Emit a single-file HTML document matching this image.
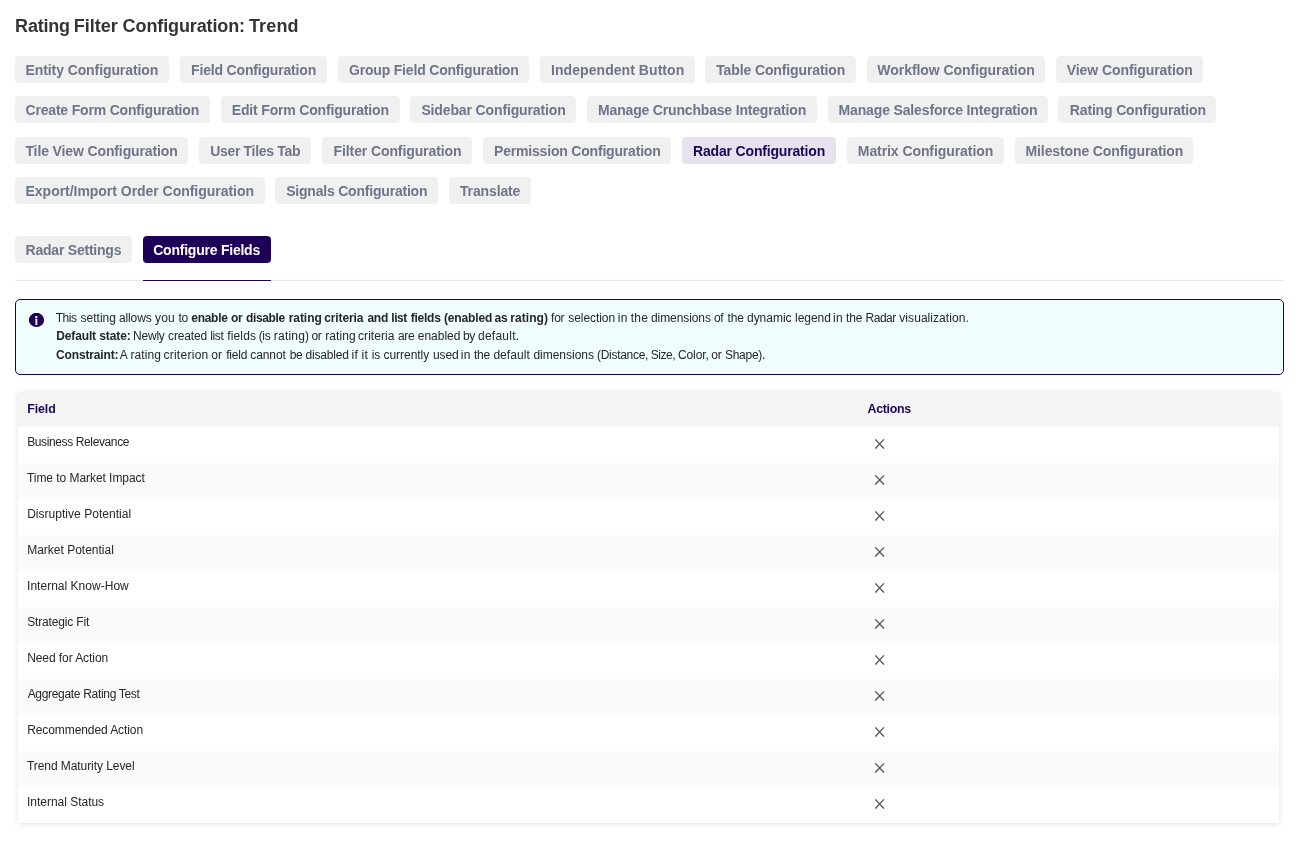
<!DOCTYPE html>
<html lang="en">
<head>
<meta charset="utf-8">
<title>Rating Filter Configuration: Trend</title>
<style>
html,body{margin:0;padding:0;background:#fff;}
body{font-family:"Liberation Sans", sans-serif;}
#app{position:relative;width:1299px;height:846px;overflow:hidden;background:#fff;will-change:transform;}
h1,p{margin:0;padding:0;font-weight:inherit;font-size:inherit;}
.t{position:absolute;display:block;white-space:pre;font-size:12px;line-height:18px;font-weight:400;color:#262626;}
b.t{font-weight:700;}
.title .t{font-size:18px;line-height:27px;font-weight:700;color:#343434;}
.pill{position:absolute;display:block;height:27px;border-radius:4px;background:#f0f0f1;text-decoration:none;}
.pill .t{font-size:14px;line-height:21px;font-weight:700;color:#6f7586;}
.pill.active{background:#e6e3ee;}
.pill.active .t{color:#1f0459;}
.pill.current{background:#1f0059;}
.pill.current .t{color:#fff;}
.line{position:absolute;left:15px;top:280px;width:1269px;height:1px;background:#e2e8f0;}
.line i{position:absolute;left:128px;top:0;width:128px;height:1px;background:#1f0059;}
.info{position:absolute;left:15px;top:299px;width:1267px;height:74px;border:1px solid #1f0059;border-radius:5px;background:#f0fdff;}
.ico,.x{position:absolute;display:block;}
.table{position:absolute;left:18px;top:393px;width:1261px;height:430px;border-radius:1px;background:#fff;box-shadow:0 0.5px 6px rgba(85,120,155,0.2);}
.th{position:absolute;left:0;top:0;width:100%;height:34px;background:#f5f5f5;}
.th .t{font-size:12.4px;line-height:19px;font-weight:700;color:#1f0459;}
.tr{position:absolute;left:0;width:100%;height:36px;background:#fff;}
.tr.alt{background:#fafafa;}
</style>
</head>
<body>
<div id="app">
<h1 class="title"><span class="t" style="left:15.1px;top:13.26px;letter-spacing:-0.208px">Rating </span><span class="t" style="left:73.85px;top:13.26px;letter-spacing:0.002px">Filter </span><span class="t" style="left:122.61px;top:13.26px;letter-spacing:-0.113px">Configuration: </span><span class="t" style="left:248.95px;top:13.26px;letter-spacing:0.156px">Trend</span></h1>
<nav class="nav">
<a class="pill" style="left:15px;top:56px;width:154px"><span class="t" style="left:10.56px;top:3.75px;letter-spacing:-0.097px">Entity Configuration</span></a>
<a class="pill" style="left:180px;top:56px;width:147px"><span class="t" style="left:11.06px;top:3.75px;letter-spacing:-0.174px">Field Configuration</span></a>
<a class="pill" style="left:338px;top:56px;width:191px"><span class="t" style="left:10.98px;top:3.75px;letter-spacing:-0.184px">Group Field Configuration</span></a>
<a class="pill" style="left:540px;top:56px;width:155px"><span class="t" style="left:11.06px;top:3.75px;letter-spacing:0.059px">Independent Button</span></a>
<a class="pill" style="left:705px;top:56px;width:151px"><span class="t" style="left:11.19px;top:3.75px;letter-spacing:-0.117px">Table Configuration</span></a>
<a class="pill" style="left:867px;top:56px;width:178px"><span class="t" style="left:10.34px;top:3.75px;letter-spacing:-0.046px">Workflow Configuration</span></a>
<a class="pill" style="left:1056px;top:56px;width:147px"><span class="t" style="left:10.75px;top:3.75px;letter-spacing:-0.076px">View Configuration</span></a>
<a class="pill" style="left:15px;top:96px;width:194.5px"><span class="t" style="left:10.48px;top:3.75px;letter-spacing:-0.181px">Create Form Configuration</span></a>
<a class="pill" style="left:221px;top:96px;width:179px"><span class="t" style="left:10.81px;top:3.75px;letter-spacing:-0.172px">Edit Form Configuration</span></a>
<a class="pill" style="left:410px;top:96px;width:165.5px"><span class="t" style="left:11.4px;top:3.75px;letter-spacing:-0.131px">Sidebar Configuration</span></a>
<a class="pill" style="left:587px;top:96px;width:230px"><span class="t" style="left:11.06px;top:3.75px;letter-spacing:-0.177px">Manage Crunchbase Integration</span></a>
<a class="pill" style="left:828px;top:96px;width:220px"><span class="t" style="left:10.56px;top:3.75px;letter-spacing:-0.147px">Manage Salesforce Integration</span></a>
<a class="pill" style="left:1058px;top:96px;width:158px"><span class="t" style="left:11.81px;top:3.75px;letter-spacing:-0.158px">Rating Configuration</span></a>
<a class="pill" style="left:15px;top:137px;width:172.5px"><span class="t" style="left:10.44px;top:3.75px;letter-spacing:-0.124px">Tile View Configuration</span></a>
<a class="pill" style="left:199px;top:137px;width:111.5px"><span class="t" style="left:11.16px;top:3.75px;letter-spacing:-0.316px">User Tiles Tab</span></a>
<a class="pill" style="left:322px;top:137px;width:150px"><span class="t" style="left:11.56px;top:3.75px;letter-spacing:-0.102px">Filter Configuration</span></a>
<a class="pill" style="left:483px;top:137px;width:188px"><span class="t" style="left:11.06px;top:3.75px;letter-spacing:-0.192px">Permission Configuration</span></a>
<a class="pill active" style="left:682px;top:137px;width:153.5px"><span class="t" style="left:11.06px;top:3.75px;letter-spacing:-0.174px">Radar Configuration</span></a>
<a class="pill" style="left:847px;top:137px;width:157px"><span class="t" style="left:10.81px;top:3.75px;letter-spacing:-0.076px">Matrix Configuration</span></a>
<a class="pill" style="left:1015px;top:137px;width:178px"><span class="t" style="left:10.56px;top:3.75px;letter-spacing:-0.114px">Milestone Configuration</span></a>
<a class="pill" style="left:15px;top:177px;width:249.5px"><span class="t" style="left:10.56px;top:3.75px;letter-spacing:-0.031px">Export/Import Order Configuration</span></a>
<a class="pill" style="left:275px;top:177px;width:163px"><span class="t" style="left:11.15px;top:3.75px;letter-spacing:-0.204px">Signals Configuration</span></a>
<a class="pill" style="left:449px;top:177px;width:82px"><span class="t" style="left:10.94px;top:3.75px;letter-spacing:-0.131px">Translate</span></a>
</nav>
<div class="tabs">
<a class="pill" style="left:15px;top:236px;width:117px"><span class="t" style="left:10.56px;top:3.75px;letter-spacing:-0.223px">Radar Settings</span></a>
<a class="pill current" style="left:143px;top:236px;width:128px"><span class="t" style="left:10.23px;top:3.75px;letter-spacing:-0.230px">Configure Fields</span></a>
<div class="line"><i></i></div>
</div>
<div class="info">
<svg class="ico" style="left:13px;top:13px" width="18" height="18" viewBox="0 0 18 18"><ellipse cx="7.5" cy="6.95" rx="7.6" ry="7.15" fill="#1f0059"/><rect x="6.15" y="2.95" width="2.3" height="2" rx="0.6" fill="#fff"/><path d="M6 5.85h2.35v6.25h-1.95v-5.65h-0.4z" fill="#fff" fill-opacity="0.92"/></svg>
<p>
<span class="t w" style="left:39.72px;top:8.84px;letter-spacing:-0.500px">This </span><span class="t w" style="left:64.62px;top:8.84px;letter-spacing:-0.000px">setting </span><span class="t w" style="left:102.89px;top:8.84px;letter-spacing:-0.103px">allows </span><span class="t w" style="left:139.02px;top:8.84px;letter-spacing:0.183px">you </span><span class="t w" style="left:162.42px;top:8.84px;letter-spacing:-0.350px">to</span>
<b class="t w" style="left:175.23px;top:8.84px;letter-spacing:-0.267px">enable </b><b class="t w" style="left:215.03px;top:8.84px;letter-spacing:-0.350px">or </b><b class="t w" style="left:230.01px;top:8.84px;letter-spacing:-0.360px">disable </b><b class="t w" style="left:272.66px;top:8.84px;letter-spacing:-0.050px">rating </b><b class="t w" style="left:308.23px;top:8.84px;letter-spacing:-0.106px">criteria </b><b class="t w" style="left:351.45px;top:8.84px;letter-spacing:-0.251px">and </b><b class="t w" style="left:375.31px;top:8.84px;letter-spacing:-0.453px">list </b><b class="t w" style="left:394.69px;top:8.84px;letter-spacing:-0.229px">fields </b><b class="t w" style="left:428px;top:8.84px;letter-spacing:-0.151px">(enabled </b><b class="t w" style="left:478.57px;top:8.84px;letter-spacing:-0.350px">as </b><b class="t w" style="left:494.16px;top:8.84px;letter-spacing:0.082px">rating)</b>
<span class="t w" style="left:535.03px;top:8.84px;letter-spacing:-0.223px">for </span><span class="t w" style="left:552.27px;top:8.84px;letter-spacing:-0.058px">selection </span><span class="t w" style="left:601.8px;top:8.84px;letter-spacing:0.250px">in </span><span class="t w" style="left:614.72px;top:8.84px;letter-spacing:0.214px">the </span><span class="t w" style="left:635px;top:8.84px;letter-spacing:-0.085px">dimensions </span><span class="t w" style="left:698.06px;top:8.84px;letter-spacing:-0.350px">of </span><span class="t w" style="left:711.62px;top:8.84px;letter-spacing:-0.236px">the </span><span class="t w" style="left:731px;top:8.84px;letter-spacing:-0.028px">dynamic </span><span class="t w" style="left:779.04px;top:8.84px;letter-spacing:-0.053px">legend </span><span class="t w" style="left:817px;top:8.84px;letter-spacing:0.250px">in </span><span class="t w" style="left:830.02px;top:8.84px;letter-spacing:-0.086px">the </span><span class="t w" style="left:849.61px;top:8.84px;letter-spacing:-0.500px">Radar </span><span class="t w" style="left:883.31px;top:8.84px;letter-spacing:0.060px">visualization.</span>
</p>
<p>
<b class="t w" style="left:40.25px;top:27.24px;letter-spacing:-0.137px">Default </b><b class="t w" style="left:83.28px;top:27.24px;letter-spacing:-0.108px">state:</b>
<span class="t w" style="left:117.07px;top:27.24px;letter-spacing:-0.216px">Newly </span><span class="t w" style="left:152.09px;top:27.24px;letter-spacing:-0.158px">created </span><span class="t w" style="left:194.24px;top:27.24px;letter-spacing:-0.358px">list </span><span class="t w" style="left:211.33px;top:27.24px;letter-spacing:0.118px">fields </span><span class="t w" style="left:242.71px;top:27.24px;letter-spacing:-0.350px">(is </span><span class="t w" style="left:257.85px;top:27.24px;letter-spacing:0.204px">rating) </span><span class="t w" style="left:295.39px;top:27.24px;letter-spacing:-0.350px">or </span><span class="t w" style="left:309.15px;top:27.24px;letter-spacing:0.088px">rating </span><span class="t w" style="left:342.09px;top:27.24px;letter-spacing:0.042px">criteria </span><span class="t w" style="left:382.04px;top:27.24px;letter-spacing:-0.350px">are </span><span class="t w" style="left:401.79px;top:27.24px;letter-spacing:-0.006px">enabled </span><span class="t w" style="left:447.01px;top:27.24px;letter-spacing:-0.350px">by </span><span class="t w" style="left:462px;top:27.24px;letter-spacing:0.246px">default.</span>
</p>
<p>
<b class="t w" style="left:40.11px;top:45.84px;letter-spacing:-0.160px">Constraint:</b>
<span class="t w" style="left:103.78px;top:45.84px;letter-spacing:-0.350px">A </span><span class="t w" style="left:114.45px;top:45.84px;letter-spacing:0.088px">rating </span><span class="t w" style="left:147.39px;top:45.84px;letter-spacing:0.275px">criterion </span><span class="t w" style="left:195.2px;top:45.84px;letter-spacing:0.250px">or </span><span class="t w" style="left:210.13px;top:45.84px;letter-spacing:-0.193px">field </span><span class="t w" style="left:234.29px;top:45.84px;letter-spacing:-0.087px">cannot </span><span class="t w" style="left:273.68px;top:45.84px;letter-spacing:-0.350px">be </span><span class="t w" style="left:289.4px;top:45.84px;letter-spacing:-0.161px">disabled </span><span class="t w" style="left:335.6px;top:45.84px;letter-spacing:0.250px">if </span><span class="t w" style="left:345.6px;top:45.84px;letter-spacing:0.250px">it </span><span class="t w" style="left:355.8px;top:45.84px;letter-spacing:-0.236px">is </span><span class="t w" style="left:367.49px;top:45.84px;letter-spacing:-0.035px">currently </span><span class="t w" style="left:417.07px;top:45.84px;letter-spacing:-0.160px">used </span><span class="t w" style="left:444.8px;top:45.84px;letter-spacing:0.250px">in </span><span class="t w" style="left:458.02px;top:45.84px;letter-spacing:-0.236px">the </span><span class="t w" style="left:477.4px;top:45.84px;letter-spacing:0.060px">default </span><span class="t w" style="left:517.4px;top:45.84px;letter-spacing:-0.007px">dimensions </span><span class="t w" style="left:581.06px;top:45.84px;letter-spacing:-0.301px">(Distance, </span><span class="t w" style="left:634.82px;top:45.84px;letter-spacing:-0.500px">Size, </span><span class="t w" style="left:661.89px;top:45.84px;letter-spacing:-0.074px">Color, </span><span class="t w" style="left:695.34px;top:45.84px;letter-spacing:-0.350px">or </span><span class="t w" style="left:708.96px;top:45.84px;letter-spacing:-0.265px">Shape).</span>
</p>
</div>
<div class="table">
<div class="th"><span class="t" style="left:9.32px;top:6.6px;letter-spacing:-0.131px">Field</span><span class="t" style="left:849.54px;top:6.6px;letter-spacing:-0.312px">Actions</span></div>
<div class="tr" style="top:34px"><span class="t" style="left:9.17px;top:6.04px;letter-spacing:-0.380px">Business Relevance</span><svg class="x" style="left:855.6px;top:10.95px" width="12" height="12" viewBox="0 0 12 12"><path d="M1.3 1.35 L10 10.55 M10 1.35 L1.3 10.55" stroke="#555555" stroke-width="1.35" fill="none"/></svg></div>
<div class="tr alt" style="top:70px"><span class="t" style="left:8.98px;top:6.04px;letter-spacing:-0.051px">Time to Market Impact</span><svg class="x" style="left:855.6px;top:10.95px" width="12" height="12" viewBox="0 0 12 12"><path d="M1.3 1.35 L10 10.55 M10 1.35 L1.3 10.55" stroke="#555555" stroke-width="1.35" fill="none"/></svg></div>
<div class="tr" style="top:106px"><span class="t" style="left:9.17px;top:6.04px;letter-spacing:0.029px">Disruptive Potential</span><svg class="x" style="left:855.6px;top:10.95px" width="12" height="12" viewBox="0 0 12 12"><path d="M1.3 1.35 L10 10.55 M10 1.35 L1.3 10.55" stroke="#555555" stroke-width="1.35" fill="none"/></svg></div>
<div class="tr alt" style="top:142px"><span class="t" style="left:9.17px;top:6.04px;letter-spacing:0.001px">Market Potential</span><svg class="x" style="left:855.6px;top:10.95px" width="12" height="12" viewBox="0 0 12 12"><path d="M1.3 1.35 L10 10.55 M10 1.35 L1.3 10.55" stroke="#555555" stroke-width="1.35" fill="none"/></svg></div>
<div class="tr" style="top:178px"><span class="t" style="left:9.04px;top:6.04px;letter-spacing:0.021px">Internal Know-How</span><svg class="x" style="left:855.6px;top:10.95px" width="12" height="12" viewBox="0 0 12 12"><path d="M1.3 1.35 L10 10.55 M10 1.35 L1.3 10.55" stroke="#555555" stroke-width="1.35" fill="none"/></svg></div>
<div class="tr alt" style="top:214px"><span class="t" style="left:9.16px;top:6.04px;letter-spacing:-0.150px">Strategic Fit</span><svg class="x" style="left:855.6px;top:10.95px" width="12" height="12" viewBox="0 0 12 12"><path d="M1.3 1.35 L10 10.55 M10 1.35 L1.3 10.55" stroke="#555555" stroke-width="1.35" fill="none"/></svg></div>
<div class="tr" style="top:250px"><span class="t" style="left:9.17px;top:6.04px;letter-spacing:-0.075px">Need for Action</span><svg class="x" style="left:855.6px;top:10.95px" width="12" height="12" viewBox="0 0 12 12"><path d="M1.3 1.35 L10 10.55 M10 1.35 L1.3 10.55" stroke="#555555" stroke-width="1.35" fill="none"/></svg></div>
<div class="tr alt" style="top:286px"><span class="t" style="left:9.68px;top:6.04px;letter-spacing:-0.316px">Aggregate Rating Test</span><svg class="x" style="left:855.6px;top:10.95px" width="12" height="12" viewBox="0 0 12 12"><path d="M1.3 1.35 L10 10.55 M10 1.35 L1.3 10.55" stroke="#555555" stroke-width="1.35" fill="none"/></svg></div>
<div class="tr" style="top:322px"><span class="t" style="left:9.17px;top:6.04px;letter-spacing:-0.088px">Recommended Action</span><svg class="x" style="left:855.6px;top:10.95px" width="12" height="12" viewBox="0 0 12 12"><path d="M1.3 1.35 L10 10.55 M10 1.35 L1.3 10.55" stroke="#555555" stroke-width="1.35" fill="none"/></svg></div>
<div class="tr alt" style="top:358px"><span class="t" style="left:8.98px;top:6.04px;letter-spacing:-0.069px">Trend Maturity Level</span><svg class="x" style="left:855.6px;top:10.95px" width="12" height="12" viewBox="0 0 12 12"><path d="M1.3 1.35 L10 10.55 M10 1.35 L1.3 10.55" stroke="#555555" stroke-width="1.35" fill="none"/></svg></div>
<div class="tr" style="top:394px"><span class="t" style="left:9.04px;top:6.04px;letter-spacing:-0.021px">Internal Status</span><svg class="x" style="left:855.6px;top:10.95px" width="12" height="12" viewBox="0 0 12 12"><path d="M1.3 1.35 L10 10.55 M10 1.35 L1.3 10.55" stroke="#555555" stroke-width="1.35" fill="none"/></svg></div>
</div>
</div>
</body>
</html>
